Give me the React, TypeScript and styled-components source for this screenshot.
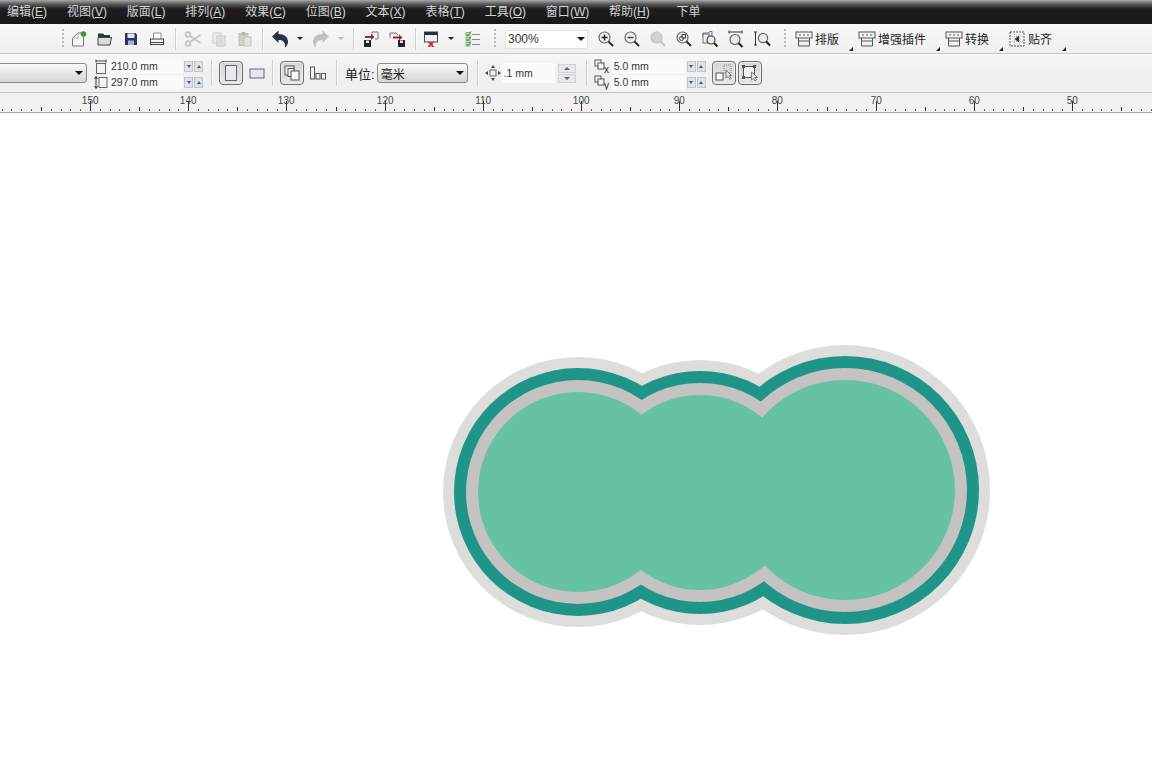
import React from "react";
import styled, { createGlobalStyle } from "styled-components";

const GlobalStyle = createGlobalStyle`
  html, body {
    margin: 0;
    padding: 0;
    background: #fff;
    overflow: hidden;
  }
`;

const FONT = `"Liberation Sans", "Noto Sans CJK SC", sans-serif`;

const Page = styled.div`
  width: 1152px;
  height: 767px;
  display: flex;
  flex-direction: column;
  font-family: ${FONT};
  overflow: hidden;
`;

const MenuBar = styled.div`
  height: 24px;
  padding-left: 7px;
  display: flex;
  align-items: center;
  gap: 19.85px;
  flex: none;
  background: linear-gradient(#a8a8a8 0, #5c5c5c 4px, #1e1e1e 9px, #171717 100%);
  color: #e2e2e2;
  font-size: 12px;
  white-space: nowrap;
`;

const MenuItem = styled.span<{ $ml?: number }>`
  margin-left: ${({ $ml }) => $ml ?? 0}px;
  padding-bottom: 3px;
  opacity: 0.92;
`;

const ToolRow = styled.div`
  height: 29px;
  flex: none;
  display: flex;
  align-items: center;
  padding-left: 62px;
  background: linear-gradient(#f7f7f7, #f0f0f0);
  border-bottom: 1px solid #c9c9c9;
`;

const PropRow = styled.div`
  height: 38px;
  flex: none;
  display: flex;
  align-items: center;
  background: linear-gradient(#f8f8f8, #f0f0f0 40%);
  border-bottom: 1px solid #c6c6c6;
  overflow: hidden;
`;

const Grip = styled.div<{ $ml?: number }>`
  width: 2px;
  height: 20px;
  flex: none;
  margin-left: ${({ $ml }) => $ml ?? 0}px;
  background: repeating-linear-gradient(#b9b9b9 0 2px, transparent 2px 4px);
`;

const Sep = styled.div<{ $ml: number; $h?: number }>`
  width: 1px;
  height: ${({ $h }) => $h ?? 22}px;
  flex: none;
  margin-left: ${({ $ml }) => $ml}px;
  background: #cfcfcf;
  box-shadow: 1px 0 0 #fafafa;
`;

const Group = styled.div<{ $ml: number }>`
  display: flex;
  align-items: center;
  flex: none;
  margin-left: ${({ $ml }) => $ml}px;
`;

const IconBtn = styled.div<{ $w?: number; $ml?: number }>`
  width: ${({ $w }) => $w ?? 26}px;
  height: 24px;
  flex: none;
  margin-left: ${({ $ml }) => $ml ?? 0}px;
  display: flex;
  align-items: center;
  justify-content: center;
`;

const Caret = styled.div<{ $w: number; $off?: boolean }>`
  width: ${({ $w }) => $w}px;
  flex: none;
  display: flex;
  justify-content: center;

  &::after {
    content: "";
    border-style: solid;
    border-width: 3px 3px 0;
    border-color: ${({ $off }) => ($off ? "#b5b5b5" : "#222")} transparent transparent;
  }
`;

const Glyph = styled.svg`
  width: 18px;
  height: 18px;
  display: block;
  flex: none;
`;

const ZoomCombo = styled.div`
  width: 83px;
  height: 19px;
  margin-top: 1px;
  box-sizing: border-box;
  padding: 0 2px 0 2px;
  display: flex;
  align-items: center;
  justify-content: space-between;
  background: #fff;
  border: 1px solid #e2e2e2;
  font-size: 12px;
  color: #333;
`;

const Arrow = styled.span`
  border-style: solid;
  border-width: 4px 4px 0;
  border-color: #111 transparent transparent;
`;

const Tool = styled.div<{ $w: number }>`
  position: relative;
  width: ${({ $w }) => $w}px;
  height: 24px;
  flex: none;
  display: flex;
  align-items: center;
  gap: 2px;
  font-size: 12px;
  color: #222;
`;

const CornerMark = styled.span`
  position: absolute;
  right: 5px;
  bottom: 0;
  border-style: solid;
  border-width: 0 0 4px 4px;
  border-color: transparent transparent #222;
`;

const SelectBox = styled.div<{ $w: number; $ml: number }>`
  width: ${({ $w }) => $w}px;
  height: 20px;
  box-sizing: border-box;
  flex: none;
  margin-left: ${({ $ml }) => $ml}px;
  padding: 0 3px 0 3px;
  display: flex;
  align-items: center;
  justify-content: space-between;
  background: linear-gradient(#fafafa, #e4e4e4 55%, #d6d6d6);
  border: 1px solid #8a8a8a;
  border-radius: 3px;
  font-size: 12px;
  color: #222;
`;

const FieldStack = styled.div<{ $ml: number }>`
  display: flex;
  flex-direction: column;
  gap: 1px;
  flex: none;
  margin-top: 2px;
  margin-left: ${({ $ml }) => $ml}px;
`;

const FieldRow = styled.div`
  height: 15px;
  display: flex;
  align-items: center;
`;

const SmallIcon = styled.svg`
  width: 14px;
  height: 15px;
  flex: none;
  display: block;
`;

const FieldValue = styled.div<{ $w: number }>`
  width: ${({ $w }) => $w}px;
  height: 15px;
  box-sizing: border-box;
  padding-left: 3px;
  flex: none;
  background: #fafafa;
  font-size: 10.5px;
  line-height: 15px;
  color: #333;
  white-space: nowrap;
`;

const Spin = styled.div<{ $up?: boolean }>`
  width: 9px;
  height: 11px;
  flex: none;
  margin-left: 1px;
  display: flex;
  align-items: center;
  justify-content: center;
  background: #dfe3e8;
  border: 1px solid #c2c6ca;
  box-sizing: border-box;

  &::after {
    content: "";
    border-style: solid;
    border-width: ${({ $up }) => ($up ? "0 2.5px 3px" : "3px 2.5px 0")};
    border-color: ${({ $up }) =>
      $up ? "transparent transparent #4a5a6e" : "#4a5a6e transparent transparent"};
  }
`;

const StateBtn = styled.div<{ $on?: boolean; $ml: number }>`
  width: 24px;
  height: 24px;
  box-sizing: border-box;
  flex: none;
  margin-left: ${({ $ml }) => $ml}px;
  display: flex;
  align-items: center;
  justify-content: center;
  border-radius: 4px;
  border: 1px solid ${({ $on }) => ($on ? "#6e6e6e" : "transparent")};
  background: ${({ $on }) => ($on ? "linear-gradient(#d6d6d6, #e6e6e6)" : "transparent")};
  box-shadow: ${({ $on }) => ($on ? "inset 0 0 0 1px #efefef" : "none")};
`;

const UnitLabel = styled.span<{ $ml: number }>`
  margin-left: ${({ $ml }) => $ml}px;
  flex: none;
  font-size: 13px;
  color: #222;
  white-space: nowrap;
`;

const NudgeValue = styled.div<{ $ml: number }>`
  width: 53px;
  height: 20px;
  box-sizing: border-box;
  padding-left: 2px;
  flex: none;
  margin-left: ${({ $ml }) => $ml}px;
  background: #fbfbfb;
  font-size: 10.5px;
  line-height: 20px;
  color: #333;
`;

const NudgeSpin = styled.div`
  width: 18px;
  height: 19px;
  margin-left: 3px;
  flex: none;
  display: grid;
  grid-template-rows: 1fr 1fr;
  gap: 1px;
`;

const NudgeStep = styled.div<{ $up?: boolean }>`
  display: flex;
  align-items: center;
  justify-content: center;
  background: #e6e8eb;
  border: 1px solid #cfd2d5;

  &::after {
    content: "";
    border-style: solid;
    border-width: ${({ $up }) => ($up ? "0 3px 3px" : "3px 3px 0")};
    border-color: ${({ $up }) =>
      $up ? "transparent transparent #5a6673" : "#5a6673 transparent transparent"};
  }
`;

const RulerBar = styled.svg`
  width: 1152px;
  height: 20px;
  display: block;
  flex: none;
  background: #f1f1f1;
`;

const Canvas = styled.svg`
  width: 1152px;
  flex: 1;
  display: block;
  background: #fff;
`;

/* toolbar drawings */

const Magnifier = ({ off, children }: { off?: boolean; children?: React.ReactNode }) => (
  <Glyph viewBox="0 0 18 18">
    <circle cx="7.5" cy="7.5" r="5.5" fill={off ? "#d0d4d0" : "#eef0f2"} stroke={off ? "#bfc4bf" : "#666"} strokeWidth="1.2" />
    <path d="M11.5 11.5 L16 16" stroke={off ? "#c4c8c4" : "#2c2c2c"} strokeWidth="2" />
    {children}
  </Glyph>
);

const NewDocIcon = () => (
  <Glyph viewBox="0 0 18 18">
    <path d="M2.5 8 L8 3 H13.5 V16 H2.5 Z" fill="#f6f6f6" stroke="#7a7a7a" />
    <path d="M8 3 V8 H2.5" fill="none" stroke="#b0b0b0" />
    <circle cx="13.5" cy="4" r="2.8" fill="#3f9a33" />
  </Glyph>
);

const OpenIcon = () => (
  <Glyph viewBox="0 0 18 18">
    <path d="M2 3.5 H7 L8.5 5 H14 V8 H2 Z" fill="#2b3446" />
    <path d="M2 7.5 H15.5 L14 15 H2 Z" fill="#dcdad2" stroke="#3b4456" />
  </Glyph>
);

const SaveIcon = () => (
  <Glyph viewBox="0 0 18 18">
    <path d="M3 3 H13.5 L15 4.5 V15 H3 Z" fill="#2c3463" />
    <rect x="5.5" y="3.5" width="7" height="4.5" fill="#e6e6ee" />
    <rect x="6" y="10.5" width="6" height="4.5" fill="#aeb2c8" />
  </Glyph>
);

const PrintIcon = () => (
  <Glyph viewBox="0 0 18 18">
    <path d="M5.5 9 V3 H13 V9" fill="#fff" stroke="#8a8f96" />
    <rect x="2.5" y="9" width="13" height="5.5" fill="#f4f4f4" stroke="#444" />
    <path d="M2.5 12.5 H15.5" stroke="#444" />
  </Glyph>
);

const ScissorsIcon = () => (
  <Glyph viewBox="0 0 18 18">
    <g fill="none" stroke="#c3c3c3" strokeWidth="1.6">
      <circle cx="4" cy="4.5" r="2.4" />
      <circle cx="4" cy="13.5" r="2.4" />
      <path d="M6 6 L16.5 13 M6 12 L16.5 5" />
    </g>
  </Glyph>
);

const CopyIcon = () => (
  <Glyph viewBox="0 0 18 18">
    <rect x="3" y="3" width="8" height="10" fill="#ececec" stroke="#cfcfcf" />
    <rect x="7" y="6" width="8" height="10" fill="#e4e4e4" stroke="#c6c6c6" />
    <path d="M9 9 H13 M9 11 H13 M9 13 H13" stroke="#cfcfcf" />
  </Glyph>
);

const PasteIcon = () => (
  <Glyph viewBox="0 0 18 18">
    <rect x="3" y="3.5" width="9" height="12" fill="#cfcfca" stroke="#bdbdb8" />
    <rect x="5.5" y="2" width="4" height="3" fill="#b5b5b0" />
    <rect x="8" y="7" width="7" height="9" fill="#e2e2e2" stroke="#c4c4c4" />
  </Glyph>
);

const UndoIcon = ({ redo }: { redo?: boolean }) => (
  <Glyph viewBox="0 0 18 18">
    <g transform={redo ? "matrix(-1 0 0 1 18 0)" : undefined} fill={redo ? "#c0c2c6" : "#26324a"}>
      <path d="M1 6.5 L7.5 .5 V4 C13.5 4 17 7.5 17 11.5 C17 14 16 16.2 14 17.5 C14.6 12.5 12.5 10 7.5 10 V13 Z" />
    </g>
  </Glyph>
);

const TransferIcon = ({ out }: { out?: boolean }) => (
  <Glyph viewBox="0 0 18 18">
    <path d={out ? "M2 8 V3 H8 L10 5" : "M10 8 V2 H16 V9 H13"} fill="none" stroke="#777" />
    <rect x={out ? 10 : 2} y="10" width="7" height="7" fill="#1f2430" />
    <rect x={out ? 12 : 4} y="10.5" width="3" height="2.5" fill="#e8e8e8" />
    <path d={out ? "M5 6.5 H11 V4.5 L14.5 7.5 L11 10.5 V8.5 H5 Z" : "M3 6 H9 V4 L12.5 7 L9 10 V8 H3 Z"} fill="#a5222a" />
  </Glyph>
);

const PublishIcon = () => (
  <Glyph viewBox="0 0 18 18">
    <rect x="2.5" y="2" width="13" height="10" fill="#f0f0f0" stroke="#444" />
    <rect x="2.5" y="2" width="13" height="3" fill="#2a2f3c" />
    <path d="M6 12 H12 L10.5 14.5 L12.5 17 H10 L9 15.8 L8 17 H5.5 L7.5 14.5 Z" fill="#d8342c" />
  </Glyph>
);

const ChecklistIcon = () => (
  <Glyph viewBox="0 0 18 18">
    <g fill="#e3efdc" stroke="#8ab678">
      <rect x="2" y="2.5" width="4" height="3.5" />
      <rect x="2" y="7.5" width="4" height="3.5" />
      <rect x="2" y="12.5" width="4" height="3.5" />
    </g>
    <g fill="none" stroke="#5c9a48" strokeWidth="1.2">
      <path d="M2.5 4 L4 5.5 L7 1.5 M2.5 9 L4 10.5 L7 6.5 M2.5 14 L4 15.5 L7 11.5" />
    </g>
    <path d="M8 4.5 H16 M8 9.5 H16 M8 14.5 H16" stroke="#8a8a8a" />
  </Glyph>
);

const ZoomIn = () => (
  <Magnifier>
    <path d="M4.5 7.5 H10.5 M7.5 4.5 V10.5" stroke="#222" strokeWidth="1.5" />
  </Magnifier>
);

const ZoomOut = () => (
  <Magnifier>
    <path d="M4.5 7.5 H10.5" stroke="#444" strokeWidth="1.5" />
  </Magnifier>
);

const ZoomSelected = () => (
  <Magnifier>
    <circle cx="6.5" cy="8.5" r="2" fill="none" stroke="#444" />
    <rect x="7" y="4.5" width="3.5" height="3.5" fill="none" stroke="#444" />
  </Magnifier>
);

const ZoomPage = () => (
  <Glyph viewBox="0 0 18 18">
    <path d="M2 3 H7 L9 1.5 H11 V7 H2 Z" fill="#dfe4ea" stroke="#6c7480" />
    <rect x="2" y="4" width="6" height="9" fill="#eef0f4" stroke="#6c7480" />
    <circle cx="10" cy="10" r="4" fill="#eef0f2" stroke="#444" strokeWidth="1.2" />
    <path d="M13 13 L16.5 16.5" stroke="#222" strokeWidth="2" />
  </Glyph>
);

const ZoomWidth = () => (
  <Glyph viewBox="0 0 18 18">
    <path d="M2 2 H15 M2 .5 V3.5 M15 .5 V3.5" stroke="#333" />
    <circle cx="8" cy="9.5" r="5" fill="#e8eaec" stroke="#666" strokeWidth="1.2" />
    <path d="M11.5 13 L15.5 17" stroke="#222" strokeWidth="2" />
  </Glyph>
);

const ZoomHeight = () => (
  <Glyph viewBox="0 0 18 18">
    <path d="M2.5 2 V15 M1 2 H4 M1 15 H4" stroke="#333" />
    <circle cx="10" cy="8" r="4.6" fill="#e8eaec" stroke="#666" strokeWidth="1.2" />
    <path d="M13.2 11.5 L17 15.5" stroke="#222" strokeWidth="2" />
  </Glyph>
);

const AwningIcon = () => (
  <Glyph viewBox="0 0 18 18">
    <rect x="1" y="2" width="16" height="6" fill="#f4f4f4" stroke="#555" />
    <path d="M4 5 H6 M8 5 H10 M12 5 H14" stroke="#555" />
    <path d="M3.5 8 V16 H14.5 V8 M3.5 11 H14.5" fill="none" stroke="#555" />
  </Glyph>
);

const SnapIcon = () => (
  <Glyph viewBox="0 0 18 18">
    <rect x="2" y="2" width="14" height="14" fill="none" stroke="#555" strokeDasharray="2 1" />
    <path d="M2 6.5 H16 M2 11.5 H16 M6.5 2 V16 M11.5 2 V16" stroke="#bbb" strokeDasharray="1 1" />
    <path d="M11 5.5 V12.5 L6.5 9 Z" fill="#333" />
  </Glyph>
);

const PortraitIcon = () => (
  <Glyph viewBox="0 0 18 18">
    <rect x="3.5" y="1.5" width="11" height="15" fill="#e9e8f0" stroke="#666" />
  </Glyph>
);

const LandscapeIcon = () => (
  <Glyph viewBox="0 0 18 18">
    <rect x="2" y="5" width="14" height="9" fill="#e9e8f0" stroke="#666" />
  </Glyph>
);

const PagesIcon = () => (
  <Glyph viewBox="0 0 18 18">
    <rect x="2" y="2" width="9" height="9" fill="#f2f2f2" stroke="#555" />
    <rect x="5" y="4.5" width="6" height="8" fill="#f6f6f6" stroke="#555" />
    <rect x="8" y="7" width="8" height="9" fill="#fafafa" stroke="#555" />
  </Glyph>
);

const PagesRowIcon = () => (
  <Glyph viewBox="0 0 18 18">
    <rect x="1.5" y="3" width="4" height="12" fill="#f8f8f8" stroke="#555" />
    <rect x="7" y="9.5" width="4" height="5.5" fill="#f8f8f8" stroke="#555" />
    <rect x="12.5" y="9.5" width="4" height="5.5" fill="#f8f8f8" stroke="#555" />
  </Glyph>
);

const NudgeIcon = () => (
  <Glyph viewBox="0 0 18 18">
    <rect x="6" y="6" width="6" height="6" fill="#eef0f2" stroke="#666" />
    <path d="M9 1 L11 4 H7 Z M9 17 L11 14 H7 Z M1 9 L4 7 V11 Z M17 9 L14 7 V11 Z" fill="#444" />
  </Glyph>
);

const ApplyGuidesIcon = () => (
  <Glyph viewBox="0 0 18 18">
    <rect x="1" y="9" width="7" height="7" fill="#f8f8f8" stroke="#555" />
    <rect x="9" y="1" width="7" height="8" fill="none" stroke="#888" strokeDasharray="1 1" />
    <path d="M11 6 V14 L13 12.5 L15 15.5 L16 14.5 L14.5 11.5 H16.5 Z" fill="#dfe4ea" stroke="#555" strokeWidth=".7" />
  </Glyph>
);

const ApplyFrameIcon = () => (
  <Glyph viewBox="0 0 18 18">
    <rect x="2.5" y="2.5" width="11" height="11" fill="#f2f2f2" stroke="#555" />
    <path d="M1 1 H4 V4 H1 Z M12 1 H15 V4 H12 Z M1 12 H4 V15 H1 Z" fill="#555" />
    <path d="M10.5 8 V16 L12.5 14.5 L14 17 L15.5 16 L14 13.5 H16.5 Z" fill="#dfe4ea" stroke="#555" strokeWidth=".7" />
  </Glyph>
);

const PageWidthIcon = () => (
  <SmallIcon viewBox="0 0 14 15">
    <path d="M2 2 H12 M2 .5 V3.5 M12 .5 V3.5" stroke="#444" />
    <rect x="2.5" y="4.5" width="9" height="10" fill="#f4f4f4" stroke="#666" />
  </SmallIcon>
);

const PageHeightIcon = () => (
  <SmallIcon viewBox="0 0 14 15">
    <path d="M2 2 V13 M.5 4 L2 1.5 L3.5 4 M.5 11 L2 13.5 L3.5 11" fill="none" stroke="#333" />
    <rect x="5" y="2.5" width="8" height="10" fill="#f4f4f4" stroke="#666" />
  </SmallIcon>
);

const OffsetIcon = ({ axis }: { axis: string }) => (
  <SmallIcon viewBox="0 0 17 15" style={{ width: 17 }}>
    <rect x="1" y="1" width="6" height="6" fill="#f4f4f4" stroke="#555" />
    <rect x="4" y="4" width="6" height="6" fill="#f4f4f4" stroke="#555" />
    <text x="10" y="14" fontSize="10" fill="#222" fontFamily="Liberation Sans">
      {axis}
    </text>
  </SmallIcon>
);

/* page data */

const MENUS: [string, string][] = [
  ["编辑", "E"],
  ["视图", "V"],
  ["版面", "L"],
  ["排列", "A"],
  ["效果", "C"],
  ["位图", "B"],
  ["文本", "X"],
  ["表格", "T"],
  ["工具", "O"],
  ["窗口", "W"],
  ["帮助", "H"],
];

const PX_PER_MM = 9.82;
const mmToX = (mm: number) => 90 + (150 - mm) * PX_PER_MM;
const RULER_MM = Array.from({ length: 121 }, (_, i) => 160 - i);

const tickLength = (mm: number) => {
  if (mm % 10 === 0) return 10;
  return mm % 5 === 0 ? 4 : 2;
};

const hasLabel = (mm: number) => mm % 10 === 0 && mm <= 150 && mm >= 50;

const BLOBS = [
  { cx: 578, cy: 492, r: 100 },
  { cx: 700, cy: 492.5, r: 97.5 },
  { cx: 845, cy: 490, r: 110 },
];

const RINGS = [
  { grow: 35, fill: "#dddddc" },
  { grow: 24, fill: "#1f9488" },
  { grow: 12, fill: "#c4c3c2" },
  { grow: 0, fill: "#66c2a3" },
];

function Field({ icon, value }: { icon: React.ReactNode; value: string }) {
  return (
    <FieldRow>
      {icon}
      <FieldValue $w={75}>{value}</FieldValue>
      <Spin />
      <Spin $up />
    </FieldRow>
  );
}

function ToolButton({ w, label, icon }: { w: number; label: string; icon: React.ReactNode }) {
  return (
    <Tool $w={w}>
      {icon}
      <span>{label}</span>
      <CornerMark />
    </Tool>
  );
}

export default function App() {
  return (
    <Page>
      <GlobalStyle />
      <MenuBar>
        {MENUS.map(([name, key]) => (
          <MenuItem key={key}>
            {name}(<u>{key}</u>)
          </MenuItem>
        ))}
        <MenuItem $ml={7}>下单</MenuItem>
      </MenuBar>

      <ToolRow>
        <Grip />
        <Group $ml={2}>
          <IconBtn><NewDocIcon /></IconBtn>
          <IconBtn><OpenIcon /></IconBtn>
          <IconBtn><SaveIcon /></IconBtn>
          <IconBtn><PrintIcon /></IconBtn>
        </Group>
        <Sep $ml={5} />
        <Group $ml={4}>
          <IconBtn><ScissorsIcon /></IconBtn>
          <IconBtn><CopyIcon /></IconBtn>
          <IconBtn><PasteIcon /></IconBtn>
        </Group>
        <Sep $ml={4} />
        <Group $ml={4}>
          <IconBtn><UndoIcon /></IconBtn>
          <Caret $w={14} />
          <IconBtn $ml={1}><UndoIcon redo /></IconBtn>
          <Caret $w={14} $off />
        </Group>
        <Sep $ml={5} />
        <Group $ml={4}>
          <IconBtn><TransferIcon /></IconBtn>
          <IconBtn><TransferIcon out /></IconBtn>
        </Group>
        <Sep $ml={5} />
        <Group $ml={4}>
          <IconBtn $w={22}><PublishIcon /></IconBtn>
          <Caret $w={18} />
          <IconBtn><ChecklistIcon /></IconBtn>
        </Group>
        <Grip $ml={8} />
        <Group $ml={9}>
          <ZoomCombo>
            300%
            <Arrow />
          </ZoomCombo>
        </Group>
        <Group $ml={5}>
          <IconBtn><ZoomIn /></IconBtn>
          <IconBtn><ZoomOut /></IconBtn>
          <IconBtn><Magnifier off /></IconBtn>
          <IconBtn><ZoomSelected /></IconBtn>
          <IconBtn><ZoomPage /></IconBtn>
          <IconBtn><ZoomWidth /></IconBtn>
          <IconBtn><ZoomHeight /></IconBtn>
        </Group>
        <Grip $ml={9} />
        <Group $ml={9}>
          <ToolButton w={63} label="排版" icon={<AwningIcon />} />
          <ToolButton w={87} label="增强插件" icon={<AwningIcon />} />
          <ToolButton w={63} label="转换" icon={<AwningIcon />} />
          <ToolButton w={63} label="贴齐" icon={<SnapIcon />} />
        </Group>
      </ToolRow>

      <PropRow>
        <SelectBox $w={97} $ml={-10}>
          <span />
          <Arrow />
        </SelectBox>
        <FieldStack $ml={7}>
          <Field icon={<PageWidthIcon />} value="210.0 mm" />
          <Field icon={<PageHeightIcon />} value="297.0 mm" />
        </FieldStack>
        <Sep $ml={8} $h={26} />
        <StateBtn $on $ml={7}><PortraitIcon /></StateBtn>
        <StateBtn $ml={2}><LandscapeIcon /></StateBtn>
        <Sep $ml={3} $h={26} />
        <StateBtn $on $ml={7}><PagesIcon /></StateBtn>
        <StateBtn $ml={2}><PagesRowIcon /></StateBtn>
        <Sep $ml={6} $h={26} />
        <UnitLabel $ml={8}>单位:</UnitLabel>
        <SelectBox $w={91} $ml={2}>
          <span>毫米</span>
          <Arrow />
        </SelectBox>
        <Sep $ml={9} $h={26} />
        <Group $ml={6}><NudgeIcon /></Group>
        <NudgeValue $ml={0}>.1 mm</NudgeValue>
        <NudgeSpin>
          <NudgeStep $up />
          <NudgeStep />
        </NudgeSpin>
        <Sep $ml={10} $h={26} />
        <FieldStack $ml={7}>
          <Field icon={<OffsetIcon axis="x" />} value="5.0 mm" />
          <Field icon={<OffsetIcon axis="y" />} value="5.0 mm" />
        </FieldStack>
        <StateBtn $on $ml={6}><ApplyGuidesIcon /></StateBtn>
        <StateBtn $on $ml={2}><ApplyFrameIcon /></StateBtn>
      </PropRow>

      <RulerBar viewBox="0 0 1152 20">
        {RULER_MM.map((mm) => {
          const x = Math.round(mmToX(mm)) + 0.5;
          const len = tickLength(mm);
          return (
            <g key={mm}>
              <line x1={x} x2={x} y1={18 - len} y2={18} stroke={len > 2 ? "#333" : "#555"} />
              {hasLabel(mm) && (
                <text x={x - 0.3} y={11} textAnchor="middle" fontSize="10" fill="#444" fontFamily="Liberation Sans">
                  {mm}
                </text>
              )}
            </g>
          );
        })}
        <line x1="0" x2="1152" y1="19.5" y2="19.5" stroke="#a8a8a8" />
      </RulerBar>

      <Canvas viewBox="0 113 1152 654">
        {RINGS.map((ring) => (
          <g key={ring.fill} fill={ring.fill}>
            {BLOBS.map((b) => (
              <circle key={b.cx} cx={b.cx} cy={b.cy} r={b.r + ring.grow} />
            ))}
          </g>
        ))}
      </Canvas>
    </Page>
  );
}
